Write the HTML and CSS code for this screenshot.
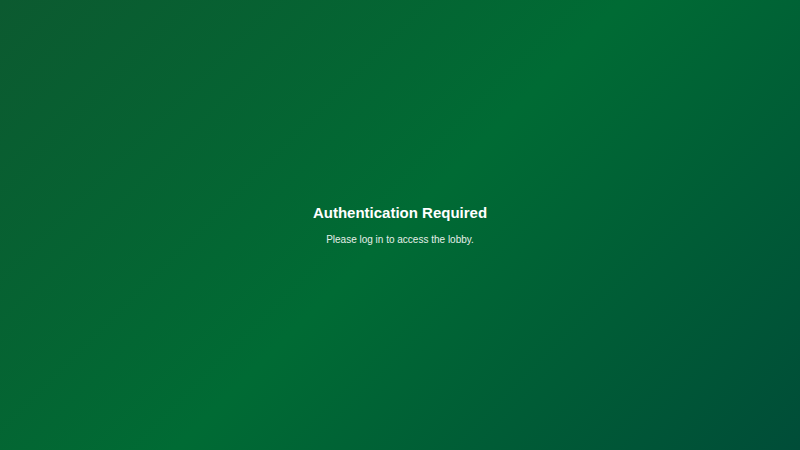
FILE: index.html
```html
<!DOCTYPE html>
<html>
<head>
<meta charset="utf-8">
<link rel="stylesheet" href="styles.css">
</head>
<body>
<div class="screen">
  <div class="message">
    <h1 class="title">Authentication Required</h1>
    <p class="subtitle">Please log in to access the lobby.</p>
  </div>
</div>
</body>
</html>
```
FILE: styles.css
```css
html, body {
  margin: 0;
  padding: 0;
  width: 800px;
  height: 450px;
}
.screen {
  width: 800px;
  height: 450px;
  background: linear-gradient(135deg, #0c5a30 0%, #006b34 50%, #004d38 100%);
  display: flex;
  align-items: center;
  justify-content: center;
  font-family: "Liberation Sans", Arial, sans-serif;
  color: #ffffff;
}
.message {
  text-align: center;
}
.title {
  margin: 0 0 10px;
  font-size: 15px;
  font-weight: bold;
  line-height: 20px;
}
.subtitle {
  margin: 0;
  font-size: 10px;
  line-height: 14px;
  color: #e6efe9;
}
```
